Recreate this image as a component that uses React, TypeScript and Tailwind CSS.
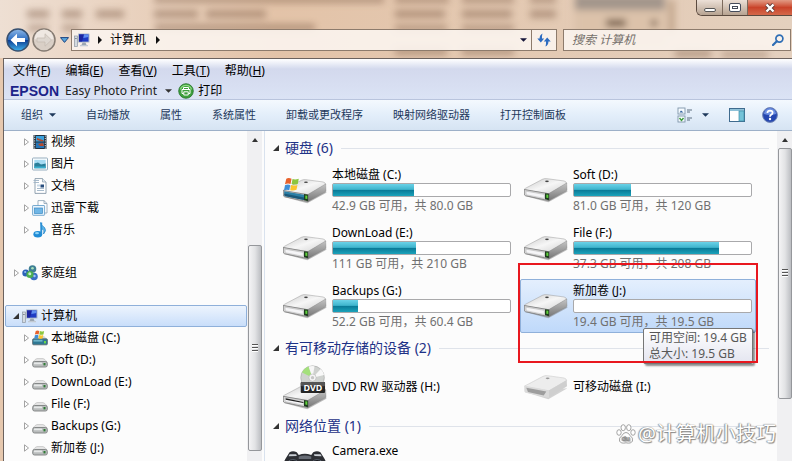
import { ReactNode } from "react";

interface Drive {
  name: string;
  info?: string;
  used?: number;
  icon: ReactNode;
  selected?: boolean;
}

interface TreeItem {
  label: string;
  icon: ReactNode;
}

/* ---------- icons ---------- */

function DriveBody() {
  return (
    <>
      <path d="M3 55 L74 74 L132 42 L132 38 Z" fill="#777" opacity="0.5" />
      <path d="M1 36 Q0 33 5 31 L56 4 Q62 1 70 2 L122 9 Q130 11 130 17 L76 48 Z" fill="url(#driveTop)" stroke="#999" strokeWidth="1.5" />
      <path d="M76 47 L130 15 L131 36 Q130 39 126 41 L76 69 Z" fill="url(#driveSide)" stroke="#777" strokeWidth="1" />
      <path d="M1 35 L76 48 L76 69 L5 54 Q1 53 1 49 Z" fill="#d9d9d9" stroke="#666" strokeWidth="2" />
      <path d="M6 40 L62 50 L62 62 L7 51 Z" fill="#f5f5f7" stroke="#999" strokeWidth="1" />
      <path d="M64 46 L76 48 L76 68 L64 65 Z" fill="#1d3b1d" />
      <path d="M68 50 L74 51 L74 61 L68 60 Z" fill="#5fd13c" />
      <ellipse cx="70" cy="10" rx="6" ry="2.5" fill="#444" />
    </>
  );
}

function DriveIcon() {
  return (
    <svg viewBox="0 0 134 76" className="h-[25px] w-11">
      <DriveBody />
    </svg>
  );
}

function WindowsFlag() {
  return (
    <>
      <path d="M8 4 Q15 0 24 4 L21 20 Q12 17 4 21 Z" fill="#e8622c" />
      <path d="M27 5 Q36 8 46 4 L43 20 Q33 24 24 20 Z" fill="#8cc63e" />
      <path d="M4 24 Q12 20 20 23 L17 39 Q9 36 1 40 Z" fill="#3f8fd8" />
      <path d="M23 23 Q33 27 42 23 L39 38 Q30 42 20 39 Z" fill="#fbc52d" />
    </>
  );
}

function SystemDriveIcon() {
  return (
    <svg viewBox="0 -6 134 82" className="h-[27px] w-11">
      <DriveBody />
      <path d="M3 37 L64 48 L64 64 L5 52 Z" fill="#2b7fa6" />
      <path d="M3 44 L64 56 L64 64 L5 52 Z" fill="#1b5878" />
      <g transform="translate(2 -5)">
        <WindowsFlag />
      </g>
    </svg>
  );
}

function DvdDriveIcon() {
  return (
    <svg viewBox="0 -60 134 136" className="h-[45px] w-11">
      <DriveBody />
      <path d="M8 41 L62 52 L62 55 L8 45 Z" fill="#222" />
      <circle cx="90" cy="-22" r="36" fill="#cfd2cf" stroke="#999" strokeWidth="1.5" />
      <path d="M90 -22 L58 -38 A36 36 0 0 1 78 -56 Z" fill="#a4e07c" />
      <path d="M90 -22 L78 -56 A36 36 0 0 1 96 -57 Z" fill="#f7f7f7" />
      <path d="M90 -22 L115 -48 A36 36 0 0 1 125 -30 Z" fill="#f8f8f8" />
      <circle cx="90" cy="-22" r="11" fill="#f4f4f4" stroke="#aaa" strokeWidth="1.5" />
      <circle cx="90" cy="-22" r="5" fill="#c5c5c5" />
      <rect x="54" y="-9" width="74" height="34" rx="3" fill="#252525" />
      <rect x="54" y="-9" width="74" height="13" rx="3" fill="#555" />
      <text x="91" y="18" textAnchor="middle" fontSize="27" fontWeight="700" fill="#fff" fontFamily="Open Sans, sans-serif">
        DVD
      </text>
    </svg>
  );
}

function RemovableIcon() {
  return (
    <svg viewBox="0 0 134 76" className="h-[25px] w-11">
      <path d="M3 52 L74 74 L132 40 Z" fill="#aaa" opacity="0.5" />
      <path d="M1 34 L58 4 Q64 1 72 2 L122 9 Q130 11 130 17 L76 48 Z" fill="#ededed" stroke="#c4c4c4" strokeWidth="1.5" />
      <path d="M76 47 L130 15 L131 34 L76 69 Z" fill="#cfcfcf" />
      <path d="M1 34 L76 47 L76 69 L5 54 Q1 53 1 49 Z" fill="#dadada" />
      <path d="M7 39 L68 50 L60 62 L12 52 Z" fill="#9d9d9d" />
      <ellipse cx="72" cy="10" rx="6" ry="2.5" fill="#999" />
    </svg>
  );
}

function CameraIcon() {
  return (
    <svg viewBox="0 0 134 76" className="h-[25px] w-11">
      <path d="M10 20 L20 4 Q30 -2 42 4 L48 12 Q66 4 86 12 L92 4 Q104 -2 114 4 L124 20 Q136 36 130 60 L92 76 L40 76 L2 60 Q-2 36 10 20 Z" fill="#2c2e33" />
      <path d="M20 10 L40 10 L42 15 L17 16 Z" fill="#c9ced4" />
      <path d="M94 10 L114 10 L118 16 L96 15 Z" fill="#c9ced4" />
      <path d="M48 17 Q66 10 86 17 L86 24 L48 24 Z" fill="#666b74" />
      <circle cx="30" cy="46" r="20" fill="#15171b" stroke="#5c6470" strokeWidth="3" />
      <circle cx="104" cy="46" r="20" fill="#15171b" stroke="#5c6470" strokeWidth="3" />
    </svg>
  );
}

function SmallDriveIcon() {
  return (
    <svg viewBox="0 0 16 16" className="mt-1 size-4">
      <path d="M1 8 Q3 5 5 4.500 H11 Q13 5 15 8 Z" fill="#e4e4e4" stroke="#bbb" strokeWidth="0.600" />
      <rect x="0.700" y="7.500" width="14.600" height="5.500" rx="1.800" fill="#b9bcbc" stroke="#7d8080" strokeWidth="0.900" />
      <rect x="2" y="8.600" width="8" height="1.600" rx="0.500" fill="#e6e8e8" />
      <rect x="11.500" y="9" width="2" height="2.400" fill="#2f7a35" />
    </svg>
  );
}

function SmallSystemDriveIcon() {
  return (
    <svg viewBox="0 0 16 16" className="size-4">
      <path d="M1 9 L4 6 H12 L15 9 Z" fill="#cfd5d8" />
      <rect x="0.600" y="8.800" width="14.800" height="6" rx="1" fill="#2f7893" stroke="#58646b" strokeWidth="0.800" />
      <rect x="1.500" y="9.800" width="9" height="1.800" fill="#6fb4c8" />
      <rect x="12" y="11" width="2" height="2.400" fill="#6ad84e" />
      <g transform="translate(2 0) scale(0.220)">
        <WindowsFlag />
      </g>
    </svg>
  );
}

function ComputerIcon() {
  return (
    <svg viewBox="0 0 16 16" className="size-4">
      <rect x="0.500" y="4" width="3" height="10.500" fill="#d4dae0" stroke="#8d98a3" strokeWidth="0.700" />
      <rect x="1.200" y="6" width="1.400" height="1" fill="#6b7783" />
      <rect x="4" y="1.500" width="11.500" height="9" rx="0.600" fill="#aeb9c7" />
      <rect x="5" y="2.400" width="9.500" height="7.200" fill="#1f3cc4" />
      <path d="M5 2.400 H10 L8 9.600 H5 Z" fill="#1c25a0" />
      <path d="M10 2.400 H14.500 V5 L9.300 6 Z" fill="#5f8df0" />
      <path d="M8.500 10.500 H11.500 L12.500 13 H7.500 Z" fill="#9ba6b2" />
      <rect x="6" y="13" width="8" height="1.300" fill="#c2cad3" />
    </svg>
  );
}

function VideoIcon() {
  return (
    <svg viewBox="0 0 16 16" className="size-4">
      <rect x="1.500" y="1" width="13" height="14" fill="#22303d" />
      <rect x="4" y="2" width="8" height="5.500" fill="#3aa0dc" />
      <rect x="4" y="8.500" width="8" height="5.500" fill="#2476b8" />
      <path d="M5 4 L12 6.500 L10 7.500 L5 6 Z M6 10 L11 9 L12 12 L8 12 Z" fill="#b44a2d" />
      <path d="M2.700 1.500 V15 M13.300 1.500 V15" stroke="#d8e6f0" strokeWidth="1" strokeDasharray="1.200 1.200" />
    </svg>
  );
}

function PictureIcon() {
  return (
    <svg viewBox="0 0 16 16" className="size-4">
      <rect x="0.500" y="2" width="15" height="12" rx="0.800" fill="#fff" stroke="#8aa5b8" strokeWidth="0.900" />
      <rect x="2.300" y="3.800" width="11.400" height="8.400" fill="#a5dbf3" />
      <path d="M2.300 7.500 L6 6.500 L9 8.500 L13.700 7.500 V12.200 H2.300 Z" fill="#2a7f9a" />
      <path d="M2.300 10.500 H13.700 V12.200 H2.300 Z" fill="#3bb0cf" />
    </svg>
  );
}

function DocumentIcon() {
  return (
    <svg viewBox="0 0 16 16" className="size-4">
      <path d="M3 0.600 H10.500 L14 4 V15.400 H3 Z" fill="#fff" stroke="#8799a8" strokeWidth="0.900" />
      <path d="M10.500 0.600 V4 H14" fill="#dfe9f1" stroke="#8799a8" strokeWidth="0.700" />
      <path d="M1.500 2.500 H7 M1.500 4.500 H7 M5 10.500 H12 M5 12.500 H12" stroke="#9eb3c6" strokeWidth="0.900" />
      <rect x="5" y="6.500" width="3" height="2" fill="#c8d9e8" />
      <rect x="8.500" y="6.500" width="3.500" height="3" fill="#274d7d" />
    </svg>
  );
}

function DownloadFolderIcon() {
  return (
    <svg viewBox="0 0 16 16" className="size-4">
      <path d="M6 0.600 H12 L15 3.500 V13 H6 Z" fill="#fff" stroke="#89a0b2" strokeWidth="0.800" />
      <path d="M12 0.600 V3.500 H15" fill="none" stroke="#89a0b2" strokeWidth="0.800" />
      <rect x="0.600" y="5.500" width="12" height="9.800" rx="0.600" fill="#eaf5fd" stroke="#6aa2cb" strokeWidth="0.900" />
      <rect x="2.500" y="8" width="8" height="5.500" fill="#6fb6e6" stroke="#3d8ac4" strokeWidth="0.700" />
    </svg>
  );
}

function MusicIcon() {
  return (
    <svg viewBox="0 0 16 16" className="size-4">
      <path d="M8.500 0.500 Q9.500 4 12.500 5.500 Q15 8.500 11.500 12 Q13 7.500 9.500 6.800 V12" fill="#5cb8ec" stroke="#2a86c8" strokeWidth="0.800" />
      <ellipse cx="5.800" cy="12.200" rx="4.400" ry="3.300" fill="#1f8cd6" />
      <path d="M8.300 0.500 H10.200 V12.500 H8.300 Z" fill="#2a8fd4" />
      <ellipse cx="5" cy="11.200" rx="2" ry="1.100" fill="#8fd4f7" />
    </svg>
  );
}

function HomegroupIcon() {
  return (
    <svg viewBox="0 0 16 16" className="size-4">
      <circle cx="3.800" cy="8" r="3.500" fill="#2a62b8" />
      <circle cx="10.500" cy="4" r="3.800" fill="#3f7f94" />
      <circle cx="12" cy="11.500" r="3.800" fill="#3970c6" />
      <circle cx="8" cy="9.500" r="3.600" fill="#4cae50" />
      <circle cx="7.800" cy="8.800" r="1.500" fill="#c8f0d0" />
      <circle cx="10.500" cy="3.200" r="1.300" fill="#a9e0ba" />
      <circle cx="3.200" cy="7" r="1.100" fill="#94bdf0" />
      <circle cx="12.500" cy="11" r="1.200" fill="#a2c6f5" />
    </svg>
  );
}

function Caret({ className }: { className: string }) {
  return (
    <svg viewBox="0 0 8 4" className={`h-1 ${className}`}>
      <path d="M0 0 H8 L4 4 Z" fill="currentColor" />
    </svg>
  );
}

function CrumbArrow() {
  return (
    <svg viewBox="0 0 4 8" className="h-2 w-1">
      <path d="M0 0 L4 4 L0 8 Z" fill="#111" />
    </svg>
  );
}

function Closed() {
  return (
    <svg viewBox="0 0 5 8" className="h-2 w-[5px]">
      <path d="M0.500 0.800 L4.500 4 L0.500 7.200 Z" fill="#fff" stroke="#999" strokeWidth="0.900" />
    </svg>
  );
}

function Opened() {
  return (
    <svg viewBox="0 0 6 6" className="size-1.5 shrink-0">
      <path d="M6 0 V6 H0 Z" fill="#333" />
    </svg>
  );
}

/* ---------- data ---------- */

const menus = [
  ["文件", "F"],
  ["编辑", "E"],
  ["查看", "V"],
  ["工具", "T"],
  ["帮助", "H"],
];

const commands = ["自动播放", "属性", "系统属性", "卸载或更改程序", "映射网络驱动器", "打开控制面板"];

const libraries: TreeItem[] = [
  { label: "视频", icon: <VideoIcon /> },
  { label: "图片", icon: <PictureIcon /> },
  { label: "文档", icon: <DocumentIcon /> },
  { label: "迅雷下载", icon: <DownloadFolderIcon /> },
  { label: "音乐", icon: <MusicIcon /> },
];

const treeDrives: TreeItem[] = [
  { label: "本地磁盘 (C:)", icon: <SmallSystemDriveIcon /> },
  { label: "Soft (D:)", icon: <SmallDriveIcon /> },
  { label: "DownLoad (E:)", icon: <SmallDriveIcon /> },
  { label: "File (F:)", icon: <SmallDriveIcon /> },
  { label: "Backups (G:)", icon: <SmallDriveIcon /> },
  { label: "新加卷 (J:)", icon: <SmallDriveIcon /> },
];

const hardDisks: Drive[] = [
  { name: "本地磁盘 (C:)", info: "42.9 GB 可用，共 80.0 GB", used: 46, icon: <SystemDriveIcon /> },
  { name: "Soft (D:)", info: "81.0 GB 可用，共 120 GB", used: 32, icon: <DriveIcon /> },
  { name: "DownLoad (E:)", info: "111 GB 可用，共 210 GB", used: 47, icon: <DriveIcon /> },
  { name: "File (F:)", info: "37.3 GB 可用，共 208 GB", used: 82, icon: <DriveIcon /> },
  { name: "Backups (G:)", info: "52.2 GB 可用，共 60.4 GB", used: 14, icon: <DriveIcon /> },
  { name: "新加卷 (J:)", info: "19.4 GB 可用，共 19.5 GB", used: 0, icon: <DriveIcon />, selected: true },
];

const removable: Drive[] = [
  { name: "DVD RW 驱动器 (H:)", icon: <DvdDriveIcon /> },
  { name: "可移动磁盘 (I:)", icon: <RemovableIcon /> },
];

/* ---------- parts ---------- */

// Defocused desktop content that shows through the glass title bar
function GlassBackdrop() {
  return (
    <svg className="absolute inset-0 h-full w-full" preserveAspectRatio="xMinYMin slice" aria-hidden="true">
      <defs>
        <filter id="soft" x="-10%" y="-50%" width="120%" height="200%">
          <feGaussianBlur stdDeviation="3.5" />
        </filter>
        <linearGradient id="driveTop" x1="0" y1="0" x2="1" y2="1">
          <stop offset="0" stopColor="#c9c9c9" />
          <stop offset="0.5" stopColor="#f6f6f6" />
          <stop offset="1" stopColor="#d2d2d2" />
        </linearGradient>
        <linearGradient id="driveSide" x1="0" y1="0" x2="0" y2="1">
          <stop offset="0" stopColor="#c4c4c4" />
          <stop offset="1" stopColor="#777" />
        </linearGradient>
      </defs>
      <g filter="url(#soft)" fill="#7a5a44" opacity="0.45">
        <rect x="27" y="10" width="22" height="8" />
        <rect x="62" y="10" width="20" height="8" />
        <rect x="96" y="10" width="28" height="8" />
        <rect x="154" y="10" width="44" height="8" />
        <rect x="206" y="10" width="60" height="8" />
        <rect x="154" y="-4" width="230" height="7" />
        <rect x="28" y="25" width="20" height="6" />
        <rect x="62" y="25" width="18" height="6" />
        <rect x="155" y="24" width="160" height="7" />
        <rect x="395" y="-4" width="54" height="7" />
        <rect x="462" y="-4" width="52" height="7" />
        <rect x="395" y="10" width="50" height="8" />
        <rect x="462" y="10" width="50" height="8" />
        <rect x="395" y="25" width="52" height="6" />
        <rect x="462" y="25" width="52" height="6" />
        <rect x="395" y="48" width="52" height="7" />
        <rect x="462" y="48" width="52" height="7" />
        <rect x="530" y="-4" width="26" height="7" />
        <rect x="530" y="10" width="26" height="8" />
        <rect x="675" y="50" width="36" height="7" />
        <rect x="722" y="52" width="46" height="5" />
      </g>
      <g filter="url(#soft)">
        <rect x="574" y="-4" width="92" height="50" fill="#dcc2aa" />
        <rect x="575" y="-5" width="90" height="15" fill="#a3958b" />
        <rect x="606" y="19" width="20" height="8" fill="#806753" />
        <rect x="651" y="20" width="6" height="6" fill="#6f5442" />
        <rect x="668" y="0" width="7" height="34" fill="#c4a88f" />
      </g>
    </svg>
  );
}

function Header() {
  return (
    <header className="relative flex h-[58px] shrink-0 flex-col bg-linear-to-r from-[#eedfd3] via-[#e3c3a8] via-35% to-[#e4d0be]">
      <GlassBackdrop />
      <div className="relative flex h-4 shrink-0 justify-end">
        <div className="flex overflow-hidden rounded-bl-md border border-t-0 border-r-0 border-[#5b4a3f]">
          <button aria-label="最小化" className="flex w-[26px] items-center justify-center border-r border-[#7c6a5d] bg-linear-to-b from-[#ece0d7] to-[#b7a391]">
            <span className="mt-1 h-1 w-3 rounded-xs border border-[#555] bg-white" />
          </button>
          <button aria-label="最大化" className="flex w-[25px] items-center justify-center border-r border-[#7c6a5d] bg-linear-to-b from-[#ece0d7] to-[#b7a391]">
            <span className="flex h-[9px] w-3 items-center justify-center rounded-xs border border-[#444b5a] bg-white">
              <span className="h-[3px] w-1.5 border border-[#444b5a]" />
            </span>
          </button>
          <button aria-label="关闭" className="flex w-11 items-center justify-center bg-linear-to-b from-[#e19a84] via-[#c9432a] to-[#d4684a]">
            <svg viewBox="0 0 12 10" className="h-2.5 w-3">
              <path d="M2.500 1.500 L9.500 8.500 M9.500 1.500 L2.500 8.500" stroke="#5b3a38" strokeWidth="4" />
              <path d="M2.500 1.500 L9.500 8.500 M9.500 1.500 L2.500 8.500" stroke="#fff" strokeWidth="2.400" />
            </svg>
          </button>
        </div>
      </div>
      <div className="relative mt-3 flex items-center pl-1.5">
        <button aria-label="后退">
          <svg viewBox="0 0 24 24" className="size-6">
            <defs>
              <linearGradient id="back" x1="0" y1="0" x2="0" y2="1">
                <stop offset="0" stopColor="#8fb9e8" />
                <stop offset="0.48" stopColor="#2f6fc2" />
                <stop offset="0.52" stopColor="#0d3f94" />
                <stop offset="1" stopColor="#3fb3ee" />
              </linearGradient>
            </defs>
            <circle cx="12" cy="12" r="11" fill="url(#back)" stroke="#37506f" strokeWidth="1.500" />
            <path d="M4.500 12 L11 5.800 V10 H19 V14 H11 V18.200 Z" fill="#fff" />
          </svg>
        </button>
        <button aria-label="前进" className="ml-0.5">
          <svg viewBox="0 0 24 24" className="size-6">
            <circle cx="12" cy="12" r="11" fill="#d9cfc6" stroke="#857b72" strokeWidth="1.500" />
            <path d="M2.500 11 A9.500 9.500 0 0 1 21.500 11 Q12 14 2.500 11" fill="#efe8e2" />
            <path d="M19.500 12 L13 5.800 V10 H5 V14 H13 V18.200 Z" fill="#ddd6cf" stroke="#c3b9b0" strokeWidth="0.700" />
          </svg>
        </button>
        <button aria-label="最近浏览的位置" className="ml-1">
          <svg viewBox="0 0 9 6" className="h-1.5 w-[9px]">
            <path d="M0.500 0.600 H8.500 L4.500 5.400 Z" fill="#58a6dc" stroke="#1c4482" strokeWidth="1" />
          </svg>
        </button>
        <nav className="ml-0.5 flex h-[22px] grow items-center border border-[#8d7b6c] bg-[#fbf4ee]/90 pl-0.5 text-xs">
          <ComputerIcon />
          <span className="ml-2">
            <CrumbArrow />
          </span>
          <button className="ml-2">计算机</button>
          <span className="ml-2.5">
            <CrumbArrow />
          </span>
          <button aria-label="以前的位置" className="mr-1 ml-auto">
            <Caret className="w-[7px] text-[#16163a]" />
          </button>
        </nav>
        <button aria-label="刷新" className="flex h-[22px] w-[25px] items-center justify-center border border-l-0 border-[#8d7b6c] bg-[#fbf4ee]/90">
          <svg viewBox="0 0 14 14" className="size-3.5" fill="#2c6bc0">
            <path d="M5.500 0.500 Q2.500 2 2.600 5.500 H0.300 L3.800 9.500 L7.200 5.500 H5 Q4.800 2.500 5.500 0.500 Z" />
            <path d="M8.500 13.500 Q11.500 12 11.400 8.500 H13.700 L10.200 4.500 L6.800 8.500 H9 Q9.200 11.500 8.500 13.500 Z" />
          </svg>
        </button>
        <label className="mr-px ml-1.5 flex h-[22px] w-[29%] items-center border border-[#8d7b6c] bg-[#fbf4ee]/90 pr-1.5 pl-2">
          <input
            type="search"
            aria-label="搜索 计算机"
            placeholder="搜索 计算机"
            className="min-w-0 grow bg-transparent text-xs italic outline-none placeholder:text-[#756f6b]"
          />
          <svg viewBox="0 0 12 12" className="size-3" fill="none">
            <circle cx="7.400" cy="4.600" r="3.500" stroke="#2f6eb5" strokeWidth="1.700" />
            <path d="M4.800 7.200 L1 11" stroke="#2f6eb5" strokeWidth="2.200" strokeLinecap="round" />
          </svg>
        </label>
      </div>
    </header>
  );
}

function MenuBar() {
  return (
    <div className="shrink-0 border-t border-[#6b625e] bg-linear-to-b from-white via-[#d3d9ed] via-25% to-[#dbe3f5] text-xs">
      <div className="flex h-6 items-center gap-[15px] pl-[9px]">
        {menus.map(([label, key]) => (
          <button key={key}>
            {label}(<u>{key}</u>)
          </button>
        ))}
      </div>
      <div className="flex h-4 items-center pl-1.5">
        <span className="font-['Liberation_Sans',sans-serif] text-sm font-bold text-[#1c2389]">EPSON</span>
        <button className="ml-1.5 flex items-center text-[#222]">
          Easy Photo Print
          <Caret className="ml-2 w-[7px] text-[#333]" />
        </button>
        <button className="ml-1.5 flex items-center gap-1">
          <svg viewBox="0 0 16 16" className="size-4">
            <circle cx="8" cy="8" r="7.300" fill="#3d9f3d" stroke="#257229" strokeWidth="0.800" />
            <path d="M2.500 6.500 A5.700 5.700 0 0 1 13.500 6.500" fill="none" stroke="#8fdb84" strokeWidth="1.200" />
            <path d="M5.500 6.500 V4.500 H10.500 V6.500 M5.500 10.500 H4 V6.500 H12 V10.500 H10.500 M5.800 8.800 H10.200 V12 H5.800 Z" fill="none" stroke="#fff" strokeWidth="1" />
          </svg>
          打印
        </button>
      </div>
    </div>
  );
}

function Toolbar() {
  return (
    <div className="flex h-8 shrink-0 items-center gap-[30px] border-t border-b border-t-[#b9c4dd] border-b-[#9db0c8] bg-linear-to-b from-[#f4f9fe] via-[#e3eefa] via-50% to-[#d6e4f3] pr-3.5 pl-[17px] text-[11px] text-[#1e395b]">
      <button className="flex items-center gap-1.5">
        组织
        <Caret className="w-[7px]" />
      </button>
      {commands.map((label) => (
        <button key={label} className="whitespace-nowrap">
          {label}
        </button>
      ))}
      <div className="ml-auto flex items-center">
        <button aria-label="更改您的视图" className="flex items-center gap-2">
          <svg viewBox="0 0 17 16" className="h-4 w-[17px]">
            <rect x="1" y="1" width="7" height="6" fill="#f6fbff" stroke="#7f95aa" strokeWidth="0.900" />
            <rect x="1" y="9" width="7" height="6" fill="#f6fbff" stroke="#7f95aa" strokeWidth="0.900" />
            <path d="M2.500 5.500 L4 3.500 L6.500 5.500 Z" fill="#2a5c9a" />
            <path d="M2.500 11 L4.500 13.500 L6.500 11" stroke="#3c9a3c" strokeWidth="1.400" fill="none" />
            <path d="M10 3 H15 M10 5 H13 M10 11 H15 M10 13 H13" stroke="#5c6e80" strokeWidth="1" />
          </svg>
          <Caret className="w-[7px]" />
        </button>
        <button aria-label="显示预览窗格" className="ml-5">
          <svg viewBox="0 0 16 14" className="h-3.5 w-4">
            <rect x="0.500" y="0.500" width="15" height="13" fill="#fff" stroke="#3f6b8e" strokeWidth="1" />
            <rect x="1" y="1" width="14" height="2" fill="#8fc1d8" />
            <rect x="10" y="3" width="5" height="10" fill="#74c3d9" stroke="#3f8fa8" strokeWidth="0.700" />
          </svg>
        </button>
        <button aria-label="获取帮助" className="ml-[17px]">
          <svg viewBox="0 0 16 16" className="size-4">
            <circle cx="8" cy="8" r="7.400" fill="#2446b0" stroke="#7387b5" strokeWidth="1" />
            <path d="M2 7 A6 6 0 0 1 14 7 Q8 9 2 7" fill="#6d8fe0" />
            <path d="M5.400 6 Q5.600 3.700 8 3.700 Q10.600 3.800 10.600 5.800 Q10.500 7.200 8.900 7.900 Q8 8.500 8 9.700" fill="none" stroke="#fff" strokeWidth="1.800" />
            <circle cx="8" cy="12" r="1.200" fill="#fff" />
          </svg>
        </button>
      </div>
    </div>
  );
}

function Scrollbar({ thumb }: { thumb: string }) {
  return (
    <div className="flex w-[15px] shrink-0 flex-col items-center bg-[#f0f0f2]">
      <button aria-label="向上滚动" className="flex h-[17px] shrink-0 items-center">
        <svg viewBox="0 0 6 4" className="h-1 w-1.5">
          <path d="M3 0 L6 4 H0 Z" fill="#333" />
        </svg>
      </button>
      <div className={`flex w-3.5 flex-col items-center justify-center gap-px rounded-xs border border-[#95979b] bg-linear-to-r from-[#f4f4f5] via-[#e2e3e5] to-[#bcbec2] ${thumb}`}>
        <span className="h-0.5 w-1.5 border-t border-[#555] bg-white" />
        <span className="h-0.5 w-1.5 border-t border-[#555] bg-white" />
        <span className="h-0.5 w-1.5 border-t border-[#555] bg-white" />
      </div>
    </div>
  );
}

function TreeRow({ item }: { item: TreeItem }) {
  return (
    <li>
      <button className="flex h-[22px] w-full items-center pl-5">
        <Closed />
        <span className="mr-[3px] ml-[3px]">{item.icon}</span>
        {item.label}
      </button>
    </li>
  );
}

function Tree() {
  return (
    <nav className="flex w-[261px] shrink-0 overflow-hidden border-r border-[#d9e2ee] text-xs">
      <div className="grow">
        <ul>
          {libraries.map((item) => (
            <TreeRow key={item.label} item={item} />
          ))}
        </ul>
        <button className="mt-[21px] flex h-[22px] w-full items-center pl-2.5">
          <Closed />
          <span className="mr-[3px] ml-[3px]">
            <HomegroupIcon />
          </span>
          家庭组
        </button>
        <button className="mt-[21px] ml-px flex h-[22px] w-full items-center rounded-xs border border-[#8fb0da] bg-linear-to-b from-[#edf4fd] to-[#c9defa] pl-[7px]">
          <Opened />
          <span className="mr-[3px] ml-[3px]">
            <ComputerIcon />
          </span>
          计算机
        </button>
        <ul>
          {treeDrives.map((item) => (
            <TreeRow key={item.label} item={item} />
          ))}
        </ul>
      </div>
      <div className="ml-px flex pr-0.5">
        <Scrollbar thumb="mt-[97px] h-[206px] shrink-0" />
      </div>
    </nav>
  );
}

function SectionTitle({ children }: { children: ReactNode }) {
  return (
    <h2 className="my-[3px] flex h-5 items-center text-sm text-[#1e3287]">
      <Opened />
      <span className="mr-2 ml-1.5">{children}</span>
      <span className="h-px grow bg-[#dfe3ea]" />
    </h2>
  );
}

function DriveTile({ drive }: { drive: Drive }) {
  return (
    <li className="relative">
      <button
        className={`my-0.5 flex h-[54px] w-full items-center gap-[5px] rounded-xs border pr-[3px] pl-[3px] text-left ${
          drive.selected ? "border-[#8fb0da] bg-linear-to-b from-[#e4effd] to-[#bfd9fa]" : "border-transparent"
        }`}
      >
        <span className="shrink-0">{drive.icon}</span>
        <span className="grow">
          <span className="block text-xs leading-[17px]">{drive.name}</span>
          {drive.used !== undefined && (
            <span className="block h-3.5 rounded-xs border border-[#a9a9ab] bg-white">
              <span
                className="block h-full bg-[linear-gradient(#6ad2e8,#3fb5cd_45%,#0a7a97_52%,#1ba3bb)]"
                style={{ width: `${drive.used}%` }}
              />
            </span>
          )}
          {drive.info && <span className="block text-xs leading-[18px] text-[#707070]">{drive.info}</span>}
        </span>
      </button>
      {drive.selected && (
        <>
          <div
            role="tooltip"
            className="absolute top-[51px] left-[123px] z-10 rounded-xs border border-[#767676] bg-linear-to-b from-white to-[#e4e5f0] px-[5px] py-px text-xs leading-4 whitespace-nowrap text-[#575757] shadow-[2px_2px_2px_#00000070]"
          >
            可用空间: 19.4 GB
            <br />
            总大小: 19.5 GB
          </div>
          <div className="pointer-events-none absolute -inset-x-0.5 -top-3.5 z-20 h-[100px] border-2 border-[#e8171f]" />
        </>
      )}
    </li>
  );
}

function DriveGrid({ drives }: { drives: Drive[] }) {
  return (
    <ul className="grid grid-cols-[repeat(auto-fill,236px)] gap-x-[5px] pl-1.5">
      {drives.map((drive) => (
        <DriveTile key={drive.name} drive={drive} />
      ))}
    </ul>
  );
}

function DeviceGrid({ drives }: { drives: Drive[] }) {
  return (
    <ul className="grid grid-cols-[repeat(auto-fill,236px)] gap-x-[5px] pl-1.5">
      {drives.map((drive) => (
        <li key={drive.name}>
          <button className="flex h-[52px] items-center gap-[5px] pl-1 text-left text-xs">
            {drive.icon}
            {drive.name}
          </button>
        </li>
      ))}
    </ul>
  );
}

function Watermark() {
  return (
    <div className="absolute right-4 bottom-3 flex items-center gap-0.5 text-xl leading-[30px] text-white [text-shadow:0_0_1px_#777,1px_1px_1px_#888,-1px_0_1px_#999]">
      <svg viewBox="0 0 20 20" className="size-5" fill="#fff" stroke="#999" strokeWidth="0.900">
        <ellipse cx="3" cy="8.500" rx="2.200" ry="2.800" />
        <ellipse cx="7.200" cy="3.700" rx="2.200" ry="3" />
        <ellipse cx="12.800" cy="3.700" rx="2.200" ry="3" />
        <ellipse cx="17" cy="8.500" rx="2.200" ry="2.800" />
        <path d="M10 8.500 Q12.500 8.500 14 11.500 Q17.500 14 16.500 17 Q15 20 10 18.800 Q5 20 3.500 17 Q2.500 14 6 11.500 Q7.500 8.500 10 8.500 Z" />
        <text x="10" y="17" textAnchor="middle" fontSize="7" fill="#888" stroke="none" fontFamily="Liberation Sans, sans-serif">
          du
        </text>
      </svg>
      <span>@计算机小技巧</span>
    </div>
  );
}

export default function App() {
  return (
    <div className="relative flex h-screen flex-col overflow-hidden bg-[#e6c8ae] font-['Noto_Sans','Noto_Sans_CJK_SC',sans-serif] text-black">
      <Header />
      <div className="ml-[3px] flex min-h-0 grow basis-0 flex-col border-l border-[#6b625e] bg-[#fcfcfc]">
        <MenuBar />
        <Toolbar />
        <div className="flex min-h-0 grow basis-0">
          <Tree />
          <main className="min-w-0 grow overflow-hidden pt-1 pr-2 pl-2">
            <SectionTitle>硬盘 (6)</SectionTitle>
            <DriveGrid drives={hardDisks} />
            <SectionTitle>有可移动存储的设备 (2)</SectionTitle>
            <DeviceGrid drives={removable} />
            <SectionTitle>网络位置 (1)</SectionTitle>
            <button className="flex gap-[5px] pt-1 pl-2.5 text-xs">
              <span className="mt-2">
                <CameraIcon />
              </span>
              Camera.exe
            </button>
          </main>
          <Scrollbar thumb="h-[76%] shrink-0" />
        </div>
      </div>
      <Watermark />
    </div>
  );
}
